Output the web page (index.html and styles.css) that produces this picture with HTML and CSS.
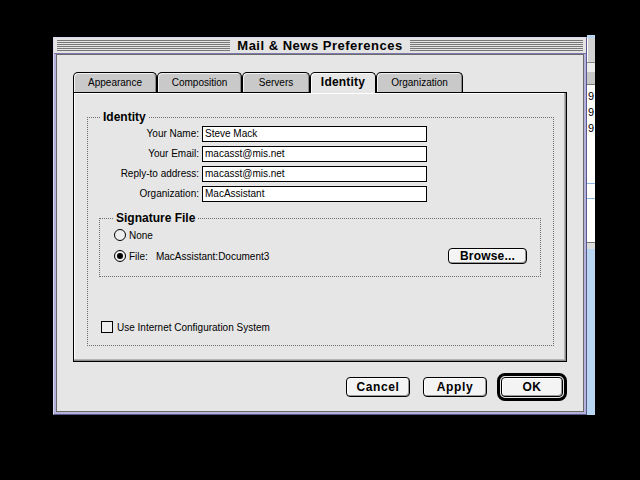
FILE: index.html
```html
<!DOCTYPE html>
<html>
<head>
<meta charset="utf-8">
<title>Mail &amp; News Preferences</title>
<link rel="stylesheet" href="styles.css">
</head>
<body>
<div class="desktop">
  <div class="bgwin">
    <div class="bg-cap"></div>
    <div class="bg-bar"></div>
    <div class="bg-gap"></div>
    <div class="bg-bar2"></div>
    <div class="bg-list">
      <div class="bg-row">9</div>
      <div class="bg-row">9</div>
      <div class="bg-row">9</div>
      <div class="bg-rule bg-rule1"></div>
      <div class="bg-rule bg-rule2"></div>
    </div>
    <div class="bg-split"></div>
    <div class="bg-fill"></div>
  </div>

  <div class="window">
    <div class="titlebar">
      <span class="stripes"></span>
      <span class="title">Mail &amp; News Preferences</span>
      <span class="stripes"></span>
    </div>
    <div class="content">
      <div class="tabs">
        <div class="tab">Appearance</div>
        <div class="tab">Composition</div>
        <div class="tab">Servers</div>
        <div class="tab tab-active">Identity</div>
        <div class="tab">Organization</div>
      </div>
      <div class="panel">
        <fieldset class="group">
          <legend>Identity</legend>
          <div class="form">
            <div class="lbl">Your Name:</div><div class="field">Steve Mack</div>
            <div class="lbl">Your Email:</div><div class="field">macasst@mis.net</div>
            <div class="lbl">Reply-to address:</div><div class="field">macasst@mis.net</div>
            <div class="lbl">Organization:</div><div class="field">MacAssistant</div>
          </div>
          <fieldset class="group sig">
            <legend>Signature File</legend>
            <div class="radio-row"><span class="radio"></span><span>None</span></div>
            <div class="radio-row file-row">
              <span class="radio radio-on"></span><span>File:</span><span class="path">MacAssistant:Document3</span>
              <span class="btn browse">Browse...</span>
            </div>
          </fieldset>
          <div class="check-row"><span class="checkbox"></span><span>Use Internet Configuration System</span></div>
        </fieldset>
      </div>
      <div class="actions">
        <div class="btn">Cancel</div>
        <div class="btn">Apply</div>
        <div class="ring"><div class="btn btn-ok">OK</div></div>
      </div>
    </div>
  </div>
</div>
</body>
</html>
```
FILE: styles.css
```css
* { box-sizing: border-box; }

body {
  margin: 0;
  background: #000;
  font-family: "Liberation Sans", Arial, sans-serif;
  font-size: 10px;
  color: #000;
}

.desktop {
  position: relative;
  width: 640px;
  height: 480px;
  overflow: hidden;
}

/* background window peeking out on the right */
.bgwin {
  position: absolute;
  left: 587px;
  top: 35px;
  width: 8px;
  height: 380px;
  display: flex;
  flex-direction: column;
  overflow: hidden;
}
.bg-cap { height: 3px; background: #b9d6f2; }
.bg-bar { height: 24px; background: #d2d2d2; border-left: 1px solid #fff; }
.bg-gap { height: 10px; background: #ececec; border-top: 1px solid #8a8a8a; }
.bg-bar2 { height: 13px; background: #c8c8c8; border-bottom: 1px solid #777; }
.bg-list {
  height: 157px;
  background: #fff;
  padding-top: 3px;
  display: flex;
  flex-direction: column;
}
.bg-row { height: 16px; line-height: 16px; font-size: 11px; padding-left: 1px; }
.bg-rule { height: 1px; background: #8db9ea; flex: none; }
.bg-rule1 { margin-top: 47px; }
.bg-rule2 { margin-top: 14px; }
.bg-split { height: 7px; background: #dcdcdc; border-top: 1px solid #777; }
.bg-fill { flex: 1; background: #b9d6f2; }

/* main window */
.window {
  position: absolute;
  left: 53px;
  top: 37px;
  width: 534px;
  height: 378px;
  display: flex;
  flex-direction: column;
  background: #b4b1da;
  border: 1px solid;
  border-color: #d8d6f0 #5a578c #5a578c #d8d6f0;
  padding: 0 2px 2px;
}

.titlebar {
  display: flex;
  align-items: center;
  gap: 7px;
  height: 16px;
  margin: 0 -2px;
  padding: 0 3px;
  background: #e4e4e4;
  border-bottom: 1px solid #7c79ac;
}
.stripes {
  flex: 1;
  height: 11px;
  background: repeating-linear-gradient(to bottom, #777 0 1px, #e4e4e4 1px 2px);
}
.title {
  font-weight: bold;
  font-size: 13px;
  letter-spacing: 0.5px;
  line-height: 14px;
}

.content {
  flex: 1;
  display: flex;
  flex-direction: column;
  background: #e6e6e6;
  border: 1px solid #6a6a6a;
  padding: 17px 16px 0 16px;
}

/* tabs */
.tabs {
  display: grid;
  grid-template-columns: 84px 85px 68px 66px 87px;
  align-items: start;
  height: 21px;
  margin-bottom: -1px;
}
.tab {
  height: 20px;
  border: 1px solid #000;
  border-bottom: none;
  border-radius: 5px 5px 0 0;
  background: #c9c9c9;
  box-shadow: inset 1px 1px #f2f2f2, inset -1px 0 #8a8a8a;
  text-align: center;
  line-height: 19px;
  font-size: 10px;
}
.tab-active {
  position: relative;
  z-index: 1;
  height: 21px;
  background: #e6e6e6;
  box-shadow: inset 1px 1px #fff;
  font-weight: bold;
  font-size: 12px;
  letter-spacing: 0.2px;
}

.panel {
  height: 270px;
  border: 1px solid #000;
  box-shadow: inset -1px -1px #8a8a8a, inset -2px -2px #b4b4b4, inset 1px 1px #fff;
  padding: 18px 12px 0 13px;
}

/* group boxes */
.group {
  margin: 0;
  min-width: 0;
  border: 1px dotted #6e6e6e;
  padding: 3px 11px 12px;
}
.group > legend {
  padding: 0 3px;
  margin-left: 1px;
  font-weight: bold;
  font-size: 12px;
  line-height: 12px;
}

.form {
  display: grid;
  grid-template-columns: 100px 225px;
  column-gap: 3px;
  row-gap: 4px;
}
.lbl { text-align: right; line-height: 16px; }
.field {
  height: 16px;
  border: 1px solid #000;
  background: #fff;
  padding-left: 2px;
  line-height: 14px;
}

.sig {
  margin: 10px 1px 0 0;
  padding: 5px 13px 12px 13px;
}
.sig > legend { margin-left: 0; }

.radio-row { display: flex; align-items: center; height: 12px; }
.file-row { height: 16px; margin-top: 7px; }
.radio {
  width: 12px;
  height: 12px;
  flex: none;
  margin: 0 3px 0 1px;
  border: 1px solid #000;
  border-radius: 50%;
  background: #eee;
  display: flex;
  align-items: center;
  justify-content: center;
}
.radio-on::after {
  content: "";
  width: 6px;
  height: 6px;
  border-radius: 50%;
  background: #000;
}
.path { margin-left: 8px; }

.btn {
  width: 64px;
  height: 20px;
  flex: none;
  border: 1px solid #000;
  border-radius: 4px;
  background: #f4f4f4;
  box-shadow: inset -1px -1px #999, inset 1px 1px #fff;
  font-weight: bold;
  font-size: 12px;
  letter-spacing: 0.6px;
  display: flex;
  align-items: center;
  justify-content: center;
}
.browse { margin-left: auto; width: 79px; height: 16px; letter-spacing: 0.2px; }

.check-row {
  display: flex;
  align-items: center;
  gap: 4px;
  margin: 44px 0 0 2px;
  height: 12px;
}
.checkbox {
  width: 12px;
  height: 12px;
  border: 1px solid #000;
  background: #eee;
}

/* dialog buttons */
.actions {
  display: flex;
  justify-content: flex-end;
  align-items: center;
  margin-top: 11px;
}
.actions > .btn + .btn { margin-left: 13px; }
.ring {
  margin-left: 10px;
  border: 3px solid #000;
  border-radius: 8px;
  padding: 1px;
}
.btn-ok { width: 62px; }
```
